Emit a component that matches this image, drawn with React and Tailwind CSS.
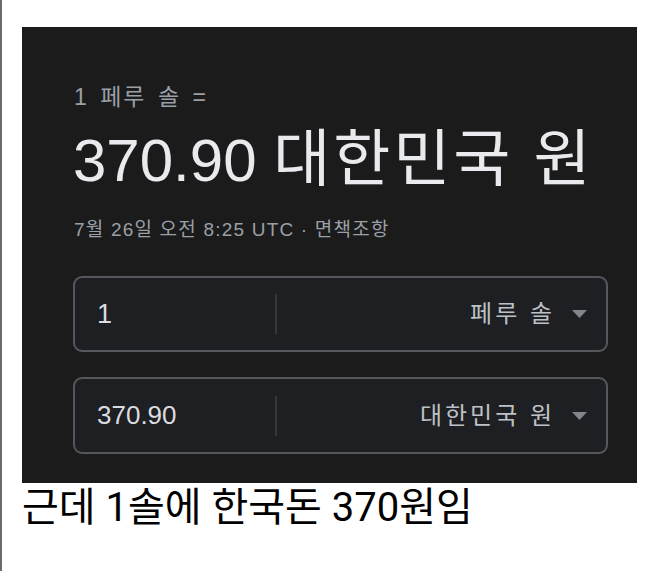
export default function App() {
  return (
    <div className="w-[660px] h-[571px] bg-white border-l-2 border-[#6b6b6b] pl-[20px] pt-[27px] overflow-hidden">
      <div className="w-[615px] h-[456px] bg-[#1b1b1c] pl-[51px] pr-[29px] pt-[58px] font-['Liberation_Sans','Noto_Sans_CJK_KR',sans-serif]">
        <div className="text-[23px] leading-[24px] text-[#9aa0a6] pl-[1px] tracking-[2px] [word-spacing:3px] whitespace-nowrap">1 페루 솔 =</div>
        <div className="mt-[21px] text-[60px] leading-[60px] text-[#e8eaed] whitespace-nowrap">
          370.90 <span className="text-[62px] tracking-[3px]">대한민국 원</span>
        </div>
        <div className="mt-[27px] text-[19px] leading-[24px] text-[#9aa0a6] pl-[1px] tracking-[1.2px] whitespace-nowrap">7월 26일 오전 8:25 UTC · 면책조항</div>
        <div className="mt-[34px] h-[76px] border-2 border-[#55575c] rounded-[9px] bg-[#1e1f22] flex items-center">
          <div className="w-[200px] pl-[22px] text-[27px] text-[#dadce0]">1</div>
          <div className="w-[2px] h-[40px] bg-[#35373b]"></div>
          <div className="flex-1 flex items-center justify-end pr-[19px] gap-[17px]">
            <span className="text-[24px] text-[#bdc1c6] tracking-[3px] whitespace-nowrap">페루 솔</span>
            <svg width="15" height="8" viewBox="0 0 15 8"><path d="M0 0 L15 0 L7.5 8 Z" fill="#80868b" /></svg>
          </div>
        </div>
        <div className="mt-[25px] h-[77px] border-2 border-[#55575c] rounded-[9px] bg-[#1e1f22] flex items-center">
          <div className="w-[200px] pl-[22px] text-[26px] text-[#dadce0]">370.90</div>
          <div className="w-[2px] h-[40px] bg-[#35373b]"></div>
          <div className="flex-1 flex items-center justify-end pr-[19px] gap-[17px]">
            <span className="text-[24px] text-[#bdc1c6] tracking-[3px] whitespace-nowrap">대한민국 원</span>
            <svg width="15" height="8" viewBox="0 0 15 8"><path d="M0 0 L15 0 L7.5 8 Z" fill="#80868b" /></svg>
          </div>
        </div>
      </div>
      <div className="text-[40px] leading-[50px] text-black font-['Roboto','Noto_Sans_CJK_KR',sans-serif] whitespace-nowrap">근데 1솔에 한국돈 370원임</div>
    </div>
  );
}
